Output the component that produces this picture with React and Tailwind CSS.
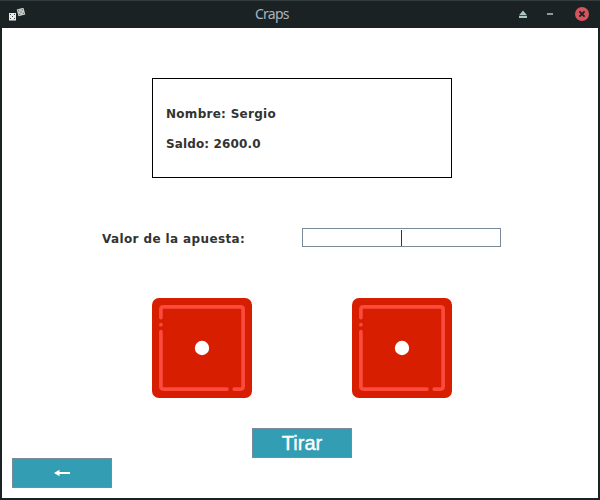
function Die() {
  return (
    <svg width="100" height="100" viewBox="0 0 100 100" className="block">
      <rect width="100" height="100" rx="7" fill="#d81e00" />
      <g fill="none" stroke="#fb4a3e" strokeWidth="3.7" strokeLinecap="round" strokeLinejoin="round">
        <path d="M8.9 19.6V11.4Q8.9 8.9 11.4 8.9H88.6Q91.1 8.9 91.1 11.4V88.6Q91.1 91.1 88.6 91.1H82.2" />
        <path d="M8.9 33.6V88.6Q8.9 91.1 11.4 91.1H74.9" />
        <path d="M8.9 26.7V26.71" />
      </g>
      <circle cx="50" cy="50" r="7.2" fill="#fff" />
    </svg>
  );
}

function DiceLogo() {
  return (
    <svg width="18" height="14" viewBox="0 0 18 14" className="block">
      <rect x="1" y="5" width="7" height="7.5" fill="#e8eae8" />
      <g fill="#4a5050">
        <rect x="2" y="6" width="1" height="1" />
        <rect x="6" y="6" width="1" height="1" />
        <rect x="4" y="8" width="1" height="1" />
        <rect x="2" y="10" width="1" height="1" />
        <rect x="6" y="10" width="1" height="1" />
      </g>
      <g transform="rotate(-15 13 4)">
        <rect x="9.5" y="0.5" width="7" height="7" fill="#c8cbc9" />
        <g fill="#6a7070">
          <rect x="10.5" y="1.5" width="1.2" height="1.2" />
          <rect x="14.3" y="1.5" width="1.2" height="1.2" />
          <rect x="12.4" y="3.4" width="1.2" height="1.2" />
          <rect x="10.5" y="5.3" width="1.2" height="1.2" />
          <rect x="14.3" y="5.3" width="1.2" height="1.2" />
        </g>
      </g>
    </svg>
  );
}

function TitleBar() {
  return (
    <header className="grid h-7 grid-cols-[255px_1fr_84px] border-t border-[#343d3e] bg-[#1b2224]">
      <div className="pt-[7px] pl-2">
        <DiceLogo />
      </div>
      <h1 className="pt-[3px] text-[14px] leading-5 text-[#a9b4c0] font-['Noto_Sans',sans-serif] tracking-[-0.75px]">
        Craps
      </h1>
      <div>
        <svg width="84" height="27" viewBox="516 1 84 27" className="block">
          <path d="M519 15.2L523 10.6L527 15.2Z" fill="#aec5be" />
          <rect x="519" y="16" width="8" height="2" fill="#aec5be" />
          <rect x="547" y="13" width="6" height="2" fill="#929998" />
          <circle cx="582" cy="14" r="7" fill="#d4555d" />
          <path d="M579.4 11.4L584.6 16.6M584.6 11.4L579.4 16.6" stroke="#1b2224" strokeWidth="1.8" />
        </svg>
      </div>
    </header>
  );
}

export default function App() {
  return (
    <div className="flex h-[500px] w-[600px] flex-col bg-[#1b2224] font-['DejaVu_Sans',sans-serif] text-[#333]">
      <TitleBar />
      <main className="mx-0.5 mb-0.5 flex flex-1 flex-col bg-white pt-[50px]">
        <section className="ml-[150px] h-[100px] w-[300px] border border-black pt-5 pl-[13px] text-[12px] leading-[30px] font-bold">
          <p className="tracking-[0.28px]">Nombre: Sergio</p>
          <p className="tracking-[0.13px]">Saldo: 2600.0</p>
        </section>
        <div className="mt-[50px] ml-[100px] flex h-5 text-[12px] leading-5 font-bold">
          <label className="w-[200px] pt-px tracking-[0.38px]">Valor de la apuesta:</label>
          <div className="flex h-[19px] w-[199px] justify-center border border-[#7a8a99] bg-white pt-px">
            <span className="h-4 w-px bg-[#333]" />
          </div>
        </div>
        <div className="mt-[50px] ml-[150px] flex gap-[100px]">
          <Die />
          <Die />
        </div>
        <button className="mt-[30px] ml-[250px] h-[30px] w-[100px] border border-[#7a8a99] bg-[#339db3] text-center text-[20px] leading-7 text-white font-['Liberation_Sans',sans-serif] [-webkit-text-stroke:0.4px_white]">
          Tirar
        </button>
        <button className="ml-[10px] flex h-[30px] w-[100px] items-center justify-center border border-[#7a8a99] bg-[#339db3]">
          <svg width="18" height="10" viewBox="0 0 18 10">
            <path d="M1 5L6.5 1.7V4H17V6H6.5V8.3Z" fill="#fff" />
          </svg>
        </button>
      </main>
    </div>
  );
}
